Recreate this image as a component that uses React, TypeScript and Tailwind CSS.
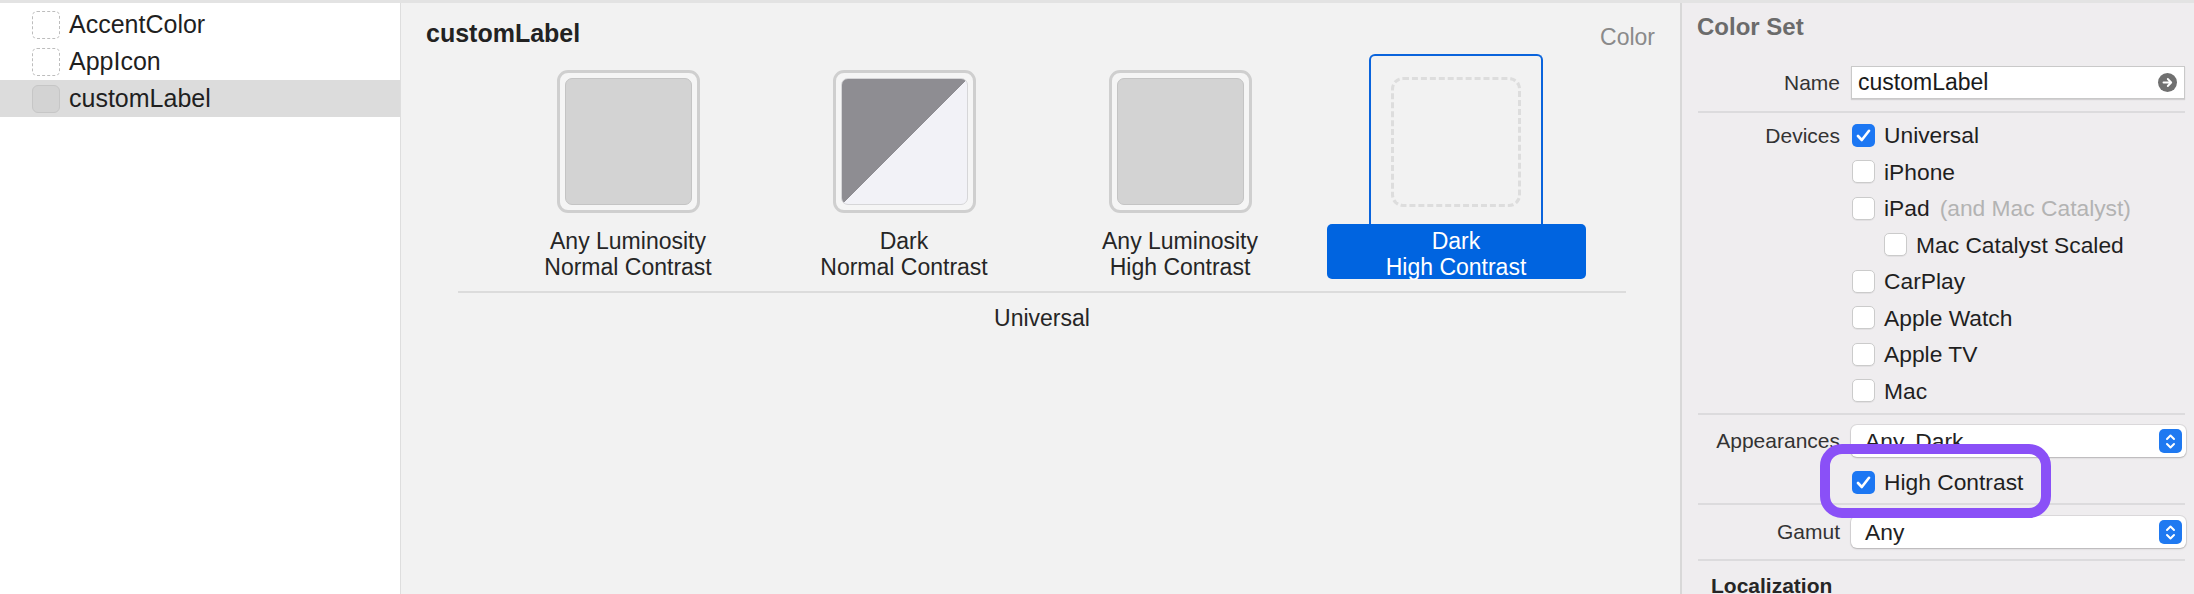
import React from "react"

type Swatch = {
  top: string
  bottom: string
  kind: "plain" | "split" | "empty"
  selected?: boolean
}

const swatches: Swatch[] = [
  { top: "Any Luminosity", bottom: "Normal Contrast", kind: "plain" },
  { top: "Dark", bottom: "Normal Contrast", kind: "split" },
  { top: "Any Luminosity", bottom: "High Contrast", kind: "plain" },
  { top: "Dark", bottom: "High Contrast", kind: "empty", selected: true },
]

const devices = [
  { label: "Universal", checked: true },
  { label: "iPhone" },
  { label: "iPad", note: "(and Mac Catalyst)" },
  { label: "Mac Catalyst Scaled", indent: true },
  { label: "CarPlay" },
  { label: "Apple Watch" },
  { label: "Apple TV" },
  { label: "Mac" },
]

function Checkbox({ checked }: { checked?: boolean }) {
  if (checked) {
    return (
      <div className="w-[23px] h-[23px] rounded-[5px] bg-[#1c77f3] flex items-center justify-center shrink-0">
        <svg width="15" height="13" viewBox="0 0 15 13">
          <path d="M2 7 L5.8 11 L13 1.8" fill="none" stroke="#fff" strokeWidth="2.6" strokeLinecap="round" strokeLinejoin="round" />
        </svg>
      </div>
    )
  }
  return <div className="w-[23px] h-[23px] rounded-[5px] bg-white border border-[#cbcbcb] shadow-[0_1px_0_rgba(0,0,0,0.05)] shrink-0" />
}

function Stepper() {
  return (
    <div className="w-[23px] h-[24px] rounded-[5px] bg-[#1f79f1] flex items-center justify-center">
      <svg width="11" height="17" viewBox="0 0 11 17">
        <path d="M2 6 L5.5 2.5 L9 6" fill="none" stroke="#fff" strokeWidth="2" strokeLinecap="round" strokeLinejoin="round" />
        <path d="M2 11 L5.5 14.5 L9 11" fill="none" stroke="#fff" strokeWidth="2" strokeLinecap="round" strokeLinejoin="round" />
      </svg>
    </div>
  )
}

function Popup({ value }: { value: string }) {
  return (
    <div className="w-[335px] h-[32px] rounded-[6px] bg-white shadow-[0_0_0_1px_rgba(0,0,0,0.08),0_1px_2px_rgba(0,0,0,0.18)] flex items-center justify-between pl-[14px] pr-[4px]">
      <span className="text-[22.8px] text-[#222]">{value}</span>
      <Stepper />
    </div>
  )
}

function Separator() {
  return <div className="ml-[16px] mr-[9px] h-[2px] bg-[#dcdbdd]" />
}

function SwatchCard({ s }: { s: Swatch }) {
  return (
    <div className="w-[276px] flex flex-col items-center">
      <div
        className={
          s.selected
            ? "w-[174px] h-[170px] border-2 border-b-0 border-[#0a64dc] rounded-t-[6px] flex justify-center pt-[14px]"
            : "w-[174px] h-[170px] border-2 border-b-0 border-transparent flex justify-center pt-[14px]"
        }
      >
        {s.kind === "empty" ? (
          <div className="w-[143px] h-[143px] flex items-center justify-center">
            <div className="w-[130px] h-[130px] border-[3px] border-dashed border-[#dddddd] rounded-[12px]" />
          </div>
        ) : (
          <div className="w-[143px] h-[143px] border-[3px] border-[#cfcfcf] rounded-[11px] bg-[#f5f5f5] p-[5px]">
            {s.kind === "split" ? (
              <div className="w-full h-full rounded-[7px] border border-[#d6d6d8] bg-[linear-gradient(to_bottom_right,#8e8d92_50%,#f2f2f7_50%)]" />
            ) : (
              <div className="w-full h-full rounded-[7px] border border-[#c4c4c4] bg-[#d3d3d3]" />
            )}
          </div>
        )}
      </div>
      <div
        className={
          s.selected
            ? "w-[259px] h-[55px] pt-[4px] rounded-[5px] bg-[#0064e0] text-white text-center text-[23px] leading-[26px]"
            : "w-[259px] h-[55px] pt-[4px] text-[#262626] text-center text-[23px] leading-[26px]"
        }
      >
        <div>{s.top}</div>
        <div>{s.bottom}</div>
      </div>
    </div>
  )
}

export default function App() {
  return (
    <div className="w-[2194px] h-[594px] overflow-hidden flex border-t-[3px] border-[#e3e3e3] font-['Liberation_Sans',Arial,sans-serif]">
      {/* Sidebar */}
      <div className="w-[400px] shrink-0 bg-white pt-[3px]">
        {[
          { name: "AccentColor", dashed: true },
          { name: "AppIcon", dashed: true },
          { name: "customLabel", selected: true },
        ].map((item) => (
          <div
            key={item.name}
            className={
              item.selected
                ? "h-[37px] flex items-center pl-[32px] bg-[#dcdcdc]"
                : "h-[37px] flex items-center pl-[32px]"
            }
          >
            {item.dashed ? (
              <div className="w-[28px] h-[28px] rounded-[5px] border border-dashed border-[#bdbdbd]" />
            ) : (
              <div className="w-[28px] h-[28px] rounded-[6px] border border-[#c6c6c6] bg-[#d3d3d3]" />
            )}
            <span className="ml-[9px] text-[25px] text-[#1f1f1f]">{item.name}</span>
          </div>
        ))}
      </div>

      {/* Main editor */}
      <div className="w-[1282px] shrink-0 bg-[#f2f2f2] border-l border-r-2 border-l-[#dedede] border-r-[#d8d8d8]">
        <div className="flex items-start justify-between px-[25px] pt-[15px]">
          <h1 className="text-[25px] leading-[30px] font-bold text-[#222]">customLabel</h1>
          <span className="mt-[4px] text-[23px] leading-[30px] text-[#8a8a8a]">Color</span>
        </div>
        <div className="ml-[57px] w-[1168px] mt-[2px]">
          <div className="flex justify-center">
            {swatches.map((s, i) => (
              <SwatchCard key={i} s={s} />
            ))}
          </div>
          <div className="mt-[12px] h-[2px] bg-[#dcdcdc]" />
          <div className="mt-[12px] text-center text-[23px] leading-[26px] text-[#262626]">Universal</div>
        </div>
      </div>

      {/* Inspector */}
      <div className="relative flex-1 bg-[#efedef] pt-[12px]">
        <div className="pl-[15px] text-[24px] leading-[24px] font-bold text-[#6b6b6b]">Color Set</div>

        <div className="mt-[27px] h-[33px] flex items-center">
          <div className="w-[158px] text-right text-[21px] text-[#333]">Name</div>
          <div className="ml-[11px] w-[334px] h-[33px] bg-white border border-[#c9c9c9] shadow-[0_1px_1px_rgba(0,0,0,0.12)] flex items-center justify-between pl-[6px] pr-[7px]">
            <span className="text-[23px] text-[#1a1a1a]">customLabel</span>
            <div className="w-[19px] h-[19px] rounded-full bg-[#707070] flex items-center justify-center">
              <svg width="11" height="11" viewBox="0 0 11 11">
                <path d="M1.5 5.5 H9 M5.8 2 L9.2 5.5 L5.8 9" fill="none" stroke="#fff" strokeWidth="1.9" strokeLinecap="round" strokeLinejoin="round" />
              </svg>
            </div>
          </div>
        </div>

        <div className="mt-[12px]">
          <Separator />
        </div>

        <div className="mt-[4px]">
          {devices.map((d, i) => (
            <div key={d.label} className="h-[36.5px] flex items-center">
              <div className="w-[158px] text-right text-[21px] text-[#333]">{i === 0 ? "Devices" : ""}</div>
              <div className={d.indent ? "ml-[44px] flex items-center" : "ml-[12px] flex items-center"}>
                <Checkbox checked={d.checked} />
                <span className="ml-[9px] text-[22.8px] text-[#1f1f1f]">{d.label}</span>
                {d.note && <span className="ml-[10px] text-[22.8px] text-[#b3b3b3]">{d.note}</span>}
              </div>
            </div>
          ))}
        </div>

        <div className="mt-[4px]">
          <Separator />
        </div>

        <div className="mt-[10px] h-[32px] flex items-center">
          <div className="w-[158px] text-right text-[21px] text-[#333]">Appearances</div>
          <div className="ml-[11px]">
            <Popup value="Any, Dark" />
          </div>
        </div>

        <div className="mt-[7px] h-[36px] flex items-center">
          <div className="w-[158px]" />
          <div className="ml-[12px] flex items-center">
            <Checkbox checked />
            <span className="ml-[9px] text-[22.8px] text-[#1f1f1f]">High Contrast</span>
          </div>
        </div>

        <div className="mt-[3px]">
          <Separator />
        </div>

        <div className="mt-[11px] h-[32px] flex items-center">
          <div className="w-[158px] text-right text-[21px] text-[#333]">Gamut</div>
          <div className="ml-[11px]">
            <Popup value="Any" />
          </div>
        </div>

        <div className="mt-[11px]">
          <Separator />
        </div>

        <div className="mt-[12px] pl-[29px] text-[21px] leading-[26px] font-bold text-[#262626]">Localization</div>

        {/* highlight around High Contrast */}
        <div className="absolute left-[138px] top-[441px] w-[231px] h-[74px] rounded-[22px] border-[10px] border-[#8a50f7]" />
      </div>
    </div>
  )
}
